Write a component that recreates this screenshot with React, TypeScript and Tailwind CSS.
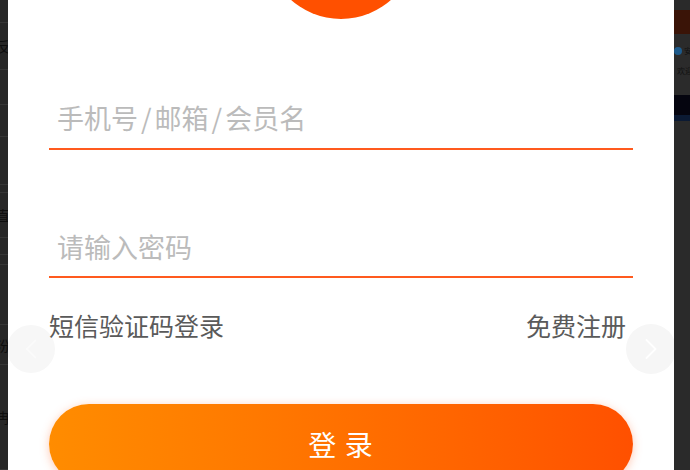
import React from "react";
import { ChevronRight, ChevronLeft } from "lucide-react";

function LeftStrip() {
  const rows: { h: string; t?: string }[] = [
    { h: "h-[23px]" },
    { h: "h-[47px]", t: "反馈" },
    { h: "h-[35px]" },
    { h: "h-[32px]" },
    { h: "h-[48px]" },
    { h: "h-[8px]" },
    { h: "h-[45px]", t: "直播" },
    { h: "h-[17px]" },
    { h: "h-[10px]" },
    { h: "h-[60px]", t: "" },
    { h: "h-[40px]", t: "汾阳" },
    { h: "h-[105px]", t: "冉冉" },
  ];
  return (
    <div className="flex w-[8px] shrink-0 flex-col overflow-hidden bg-[#272727]">
      {rows.map((r, i) => (
        <div
          key={i}
          className={`${r.h} flex shrink-0 items-center overflow-hidden border-b border-[#363636]`}
        >
          {r.t ? (
            <span className="ml-[-4px] whitespace-nowrap text-[14px] leading-none text-[#0e0e0e]">
              {r.t}
            </span>
          ) : null}
        </div>
      ))}
    </div>
  );
}

function RightStrip() {
  return (
    <div className="flex w-[16px] shrink-0 flex-col overflow-hidden bg-[#2a2a2a]">
      <div className="h-[10px] shrink-0 bg-[#2a2a2a]" />
      <div className="h-[24px] shrink-0 bg-[#3a1407]" />
      <div className="flex h-[61px] shrink-0 flex-col bg-[#2b2b2b]">
        <div className="mt-[13px] flex items-center gap-[2px]">
          <span className="h-[8px] w-[8px] shrink-0 rounded-full bg-[#1d5a8a]" />
          <span className="whitespace-nowrap text-[8px] leading-none text-[#111]">安全</span>
        </div>
        <span className="ml-[3px] mt-[12px] whitespace-nowrap text-[8px] leading-none text-[#111]">欢迎</span>
      </div>
      <div className="h-[20px] shrink-0 bg-[#05050f]" />
      <div className="h-[6px] shrink-0 bg-[#0b1a33]" />
      <div className="flex-1 bg-[#2a2a2a]" />
    </div>
  );
}

export default function App() {
  return (
    <div className="flex h-[470px] w-[690px] overflow-hidden bg-[#2a2a2a] font-['Noto_Sans_CJK_SC',sans-serif]">
      <LeftStrip />
      <main className="relative flex w-[666px] shrink-0 flex-col overflow-hidden bg-white px-[41px]">
        {/* faint background arrows showing through */}
        <div className="absolute left-[-1px] top-[325px] flex h-[48px] w-[48px] items-center justify-center rounded-full bg-[#f7f7f7]">
          <ChevronLeft size={34} strokeWidth={1.2} className="text-[#fbfbfb]" />
        </div>
        <div className="absolute left-[618px] top-[324px] flex h-[50px] w-[50px] items-center justify-center rounded-full bg-[#f6f6f6]">
          <ChevronRight size={36} strokeWidth={1.2} className="text-white" />
        </div>

        <div className="relative mt-[-131px] h-[150px] w-[150px] shrink-0 self-center rounded-full bg-[#ff5000]" />

        <div className="relative mt-[73px] flex h-[58px] shrink-0 items-center border-b-2 border-[#ff5a1e] pb-[5px] pl-[8px]">
          <span className="text-[27px] leading-none text-[#bbbbbb]">
            手机号<span className="mx-[3px]">/</span>邮箱<span className="mx-[3px]">/</span>会员名
          </span>
        </div>

        <div className="relative mt-[70px] flex h-[58px] shrink-0 items-center border-b-2 border-[#ff5a1e] pb-[4px] pl-[8px]">
          <span className="text-[27px] leading-none text-[#bbbbbb]">请输入密码</span>
        </div>

        <div className="relative mt-[32px] flex h-[30px] shrink-0 items-center justify-between pr-[7px] text-[25px] leading-[30px] text-[#5a5a5a]">
          <span>短信验证码登录</span>
          <span>免费注册</span>
        </div>

        <button className="relative mt-[64px] flex h-[80px] shrink-0 items-center justify-center rounded-full bg-gradient-to-r from-[#ff8c00] to-[#ff5000] text-[28px] tracking-[1px] text-white shadow-[0_2px_10px_rgba(255,100,40,0.35)]">
          登 录
        </button>
      </main>
      <RightStrip />
    </div>
  );
}
